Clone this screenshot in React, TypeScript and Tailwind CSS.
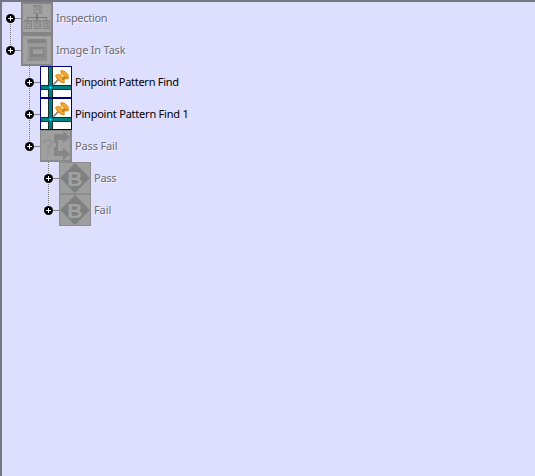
import type { ReactNode } from "react";

function InspectionIcon() {
  return (
    <svg className="size-8 shrink-0" viewBox="0 0 32 32" shapeRendering="crispEdges">
      <rect width="32" height="32" fill="#858585" />
      <rect x="2" y="2" width="28" height="28" fill="#a2a2a2" />
      <path d="M15 12h2v8h-2zM6 15h20v1H6zM6 15h1v4H6zM25 15h1v4h-1z" fill="#777" />
      <rect x="12" y="3" width="9" height="9" fill="#8b8b8b" />
      <rect x="12" y="5" width="8" height="6" fill="#969696" />
      <rect x="14" y="7" width="5" height="3" fill="#868686" />
      <rect x="15" y="8" width="3" height="2" fill="#a7a7a7" />
      {[3, 12, 21].map((x) => (
        <g key={x}>
          <rect x={x} y="18" width="8" height="9" fill="#878787" />
          <rect x={x} y="20" width="7" height="6" fill="#999" />
          <rect x={x + 2} y="21" width="4" height="4" fill="#888" />
          <rect x={x + 3} y="22" width="2" height="2" fill="#a5a5a5" />
        </g>
      ))}
    </svg>
  );
}

function ImageTaskIcon() {
  return (
    <svg className="size-8 shrink-0" viewBox="0 0 32 32" shapeRendering="crispEdges">
      <rect width="32" height="32" fill="#858585" />
      <rect x="2" y="2" width="28" height="28" fill="#a2a2a2" />
      <rect x="6" y="5" width="20" height="22" fill="#8e8e8e" />
      <rect x="7" y="5" width="18" height="4" fill="#848484" />
      <rect x="8" y="9" width="17" height="4" fill="#999" />
      <rect x="6" y="9" width="2" height="16" fill="#999" />
      <rect x="9" y="13" width="14" height="10" fill="#858585" />
      <rect x="12" y="15" width="10" height="5" fill="#9a9a9a" />
      <rect x="13" y="17" width="7" height="3" fill="#a0a0a0" />
    </svg>
  );
}

function PatternIcon() {
  return (
    <svg className="size-8 shrink-0" viewBox="0 0 32 32">
      <g shapeRendering="crispEdges">
        <rect width="32" height="32" fill="#000080" />
        <rect x="1" y="1" width="30" height="30" fill="#fff" />
        <path d="M8 1h5v30H8zM1 19h30v5H1z" fill="#182c2c" />
        <path d="M9 1h3v30H9zM1 20h30v3H1z" fill="#008080" />
        <path d="M9 21h3v1H9zM10 20h1v3h-1z" fill="#14c6ef" />
      </g>
      <path d="M13.5 18.5L18.5 13.5" stroke="#6b6f74" strokeWidth="1.5" />
      <path d="M15 9.5L17 8 20 8.5 21 7 20 5 22 4 25 5 28.5 8.5 29 12.5 27 13.5 25 13 24.5 14 25 16.5 23 17.5 20 16 17 13.5z" fill="#df9020" />
      <path d="M16 9.5L18 9 21 10.5 23.5 14 23.5 16 20.5 15z" fill="#f5ab34" />
      <path d="M21.5 5L25 6 28 9 28 11.5 25 10.5 22.5 8z" fill="#f2a52f" />
      <path d="M20 9L22 7.5 24 10 22.5 11z" fill="#ffd47a" />
      <path d="M25 10.5L23.5 14 22 12" fill="none" stroke="#b8741c" />
    </svg>
  );
}

function PassFailIcon() {
  return (
    <svg className="size-8 shrink-0" viewBox="0 0 32 32">
      <rect width="32" height="32" fill="#8a8a8a" />
      <rect x="1" y="1" width="29" height="29" fill="#9f9f9f" />
      <path d="M14 4H23V1L30 7 23 13V10H18V21H23V18L30 24 23 30V26H14V17H16V13H14z" fill="#868686" />
      <path d="M4.5 13.5Q4.5 10 8 10Q11.5 10 11.5 13Q11.5 15 9.5 16Q8 17 8 19.5" fill="none" stroke="#929292" strokeWidth="2.2" />
      <path d="M7 21h2v3H7z" fill="#929292" />
    </svg>
  );
}

function BranchIcon() {
  return (
    <svg className="size-8 shrink-0" viewBox="0 0 32 32">
      <rect width="32" height="32" fill="#8d8d8d" />
      <rect x="1" y="1" width="30" height="30" fill="#9e9e9e" />
      <path d="M16 1L31 16 16 31 1 16z" fill="#808080" />
      <text x="15.8" y="23.5" textAnchor="middle" className="font-['Liberation_Sans',sans-serif] text-[21px] font-bold" fill="#a2a2a2">
        B
      </text>
    </svg>
  );
}

function Connector({ up, down }: { up?: boolean; down?: boolean }) {
  return (
    <svg className="h-8 w-[19px] shrink-0" viewBox="0 0 19 32">
      {up && <path d="M8.5 0V16" stroke="#777780" strokeDasharray="1 1" />}
      {down && <path d="M8.5 16V32" stroke="#777780" strokeDasharray="1 1" />}
      <path d="M12 16.5h7" stroke="#808080" />
      <circle cx="8.5" cy="16.5" r="4.5" fill="#000" />
      <path d="M6 16.5h5M8.5 14v5" stroke="#fff" />
    </svg>
  );
}

type RowProps = {
  label: string;
  tracking?: string;
  icon: ReactNode;
  indent?: string;
  active?: boolean;
  up?: boolean;
  down?: boolean;
};

function TreeRow({ label, tracking = "tracking-[-0.25px]", icon, indent = "", active, up, down }: RowProps) {
  return (
    <div className={`flex h-8 items-center ${indent}`}>
      <Connector up={up} down={down} />
      {icon}
      <span
        className={`ml-[3px] whitespace-nowrap text-[11px] leading-4 ${tracking} ${
          active ? "text-black" : "text-[#6c6c6c] [text-shadow:1px_1px_0_#f4f4ff]"
        }`}
      >
        {label}
      </span>
    </div>
  );
}

export default function App() {
  return (
    <main className="h-[476px] w-[535px] overflow-hidden border-t-2 border-l-2 border-[#747781] bg-[#dedeff] font-['Noto_Sans','DejaVu_Sans',sans-serif]">
      <TreeRow label="Inspection" tracking="tracking-[-0.3px]" icon={<InspectionIcon />} down />
      <TreeRow label="Image In Task" tracking="tracking-[-0.2px]" icon={<ImageTaskIcon />} up />
      <TreeRow label="Pinpoint Pattern Find" tracking="tracking-[-0.27px]" icon={<PatternIcon />} indent="pl-[19px]" active up down />
      <TreeRow label="Pinpoint Pattern Find 1" tracking="tracking-[-0.22px]" icon={<PatternIcon />} indent="pl-[19px]" active up down />
      <TreeRow label="Pass Fail" tracking="tracking-[-0.15px]" icon={<PassFailIcon />} indent="pl-[19px]" up />
      <TreeRow label="Pass" icon={<BranchIcon />} indent="pl-[38px]" up down />
      <TreeRow label="Fail" tracking="tracking-[-0.1px]" icon={<BranchIcon />} indent="pl-[38px]" up />
    </main>
  );
}
